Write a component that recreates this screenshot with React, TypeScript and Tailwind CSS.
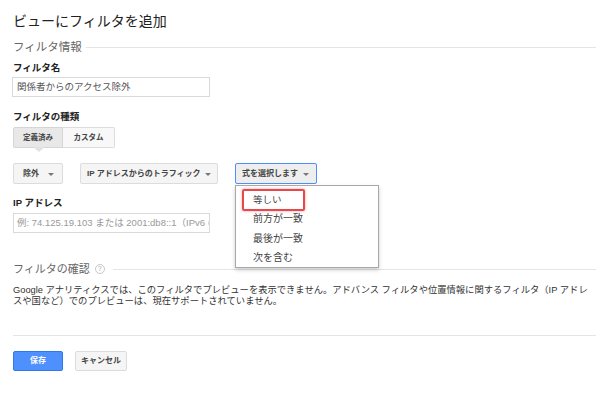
import React from 'react';

const font = { fontFamily: '"Liberation Sans", "Noto Sans CJK JP", sans-serif' };

const Caret = () => (
  <span className="ml-auto inline-block w-0 h-0 border-l-[3px] border-r-[3px] border-t-[3px] border-l-transparent border-r-transparent border-t-[#777] mt-[2px]" />
);

const menuItems = ['前方が一致', '最後が一致', '次を含む'];

export default function App() {
  return (
    <div style={font} className="w-[600px] h-[393px] bg-white pl-[13px] pr-[4px] overflow-hidden text-[#333]">
      <h1 className="pt-[11px] text-[14px] leading-[20px] text-[#222] font-normal">ビューにフィルタを追加</h1>

      <div className="mt-[8px] flex items-center gap-[4px]">
        <span className="text-[11.5px] leading-[16px] text-[#666]">フィルタ情報</span>
        <div className="flex-1 h-px bg-[#e5e5e5]" />
      </div>

      <div className="mt-[6px] text-[9.5px] leading-[13px] font-bold text-[#222]">フィルタ名</div>
      <div className="mt-[3px] -ml-px w-[198px] h-[20px] border border-[#d9d9d9] flex items-center pl-[4px] text-[9.5px] text-[#555]">
        関係者からのアクセス除外
      </div>

      <div className="mt-[13px] text-[9.5px] leading-[13px] font-bold text-[#222]">フィルタの種類</div>
      <div className="mt-[4px] flex h-[21px] text-[7.5px] font-bold text-[#444]">
        <div className="relative w-[50px] flex items-center justify-center bg-[#e8e8e8] border border-[#d5d5d5] rounded-l-[2px]">
          定義済み
          <span className="absolute left-[19px] top-full w-0 h-0 border-l-[6px] border-r-[6px] border-t-[5px] border-l-transparent border-r-transparent border-t-[#e2e2e2]" />
        </div>
        <div className="w-[52px] flex items-center justify-center bg-[#f8f8f8] border border-l-0 border-[#dcdcdc] rounded-r-[2px]">
          カスタム
        </div>
      </div>

      <div className="mt-[15px] flex gap-[17px] h-[21px] text-[8px] font-bold text-[#444]">
        <div className="w-[50px] flex items-center pl-[9px] pr-[8px] bg-[#f5f5f5] border border-[#dcdcdc] rounded-[2px]">
          除外
          <Caret />
        </div>
        <div className="w-[138px] flex items-center pl-[6px] pr-[6px] bg-[#f5f5f5] border border-[#dcdcdc] rounded-[2px]">
          IP アドレスからのトラフィック
          <Caret />
        </div>
        <div className="relative w-[82px] flex items-center pl-[6px] pr-[7px] bg-[#eeeeee] border border-[#4d90fe] rounded-[2px]">
          式を選択します
          <Caret />
          <div className="absolute left-[-1px] top-[21px] w-[144px] h-[83px] bg-white border border-[#a8a8a8] shadow-[0_2px_4px_rgba(0,0,0,0.2)] pt-[3px] px-[6px] font-normal text-[10px] text-[#444] z-10">
            <div className="w-[63px] h-[22px] border-2 border-[#e8484c] rounded-[2px] shadow-[0_0_3px_rgba(232,72,76,0.5)] flex items-center pl-[9px] text-[9.5px]">
              等しい
            </div>
            <div className="-mt-[2px]">
              {menuItems.map((item) => (
                <div key={item} className="h-[19.5px] leading-[19.5px] pl-[11px]">
                  {item}
                </div>
              ))}
            </div>
          </div>
        </div>
      </div>

      <div className="mt-[12px] text-[9.5px] leading-[13px] font-bold text-[#222]">IP アドレス</div>
      <div className="mt-[4px] w-[197px] h-[20px] border border-[#d9d9d9] flex items-center pl-[3px] text-[9.5px] text-[#999] whitespace-nowrap overflow-hidden">
        例: 74.125.19.103 または 2001:db8::1（IPv6 の
      </div>

      <div className="mt-[28px] flex items-center">
        <span className="text-[11px] leading-[16px] text-[#666]">フィルタの確認</span>
        <span className="ml-[5px] w-[10px] h-[10px] rounded-full border border-[#c8c8c8] text-[7px] leading-[8px] text-[#aaa] flex items-center justify-center">?</span>
        <div className="ml-[8px] flex-1 h-px bg-[#e5e5e5]" />
      </div>

      <p className="mt-[8px] text-[9.3px] leading-[11px] text-[#333] whitespace-nowrap">
        <span className="block">Google アナリティクスでは、このフィルタでプレビューを表示できません。アドバンス フィルタや位置情報に関するフィルタ（IP アドレ</span>
        <span className="block">スや国など）でのプレビューは、現在サポートされていません。</span>
      </p>

      <div className="mt-[28px] h-px bg-[#e5e5e5]" />

      <div className="mt-[15px] flex gap-[12px] h-[20px] text-[8px] font-bold">
        <button className="w-[50px] bg-[#4d90fe] border border-[#3079ed] rounded-[2px] text-white">保存</button>
        <button className="w-[52px] bg-[#f5f5f5] border border-[#dcdcdc] rounded-[2px] text-[#444]">キャンセル</button>
      </div>
    </div>
  );
}
